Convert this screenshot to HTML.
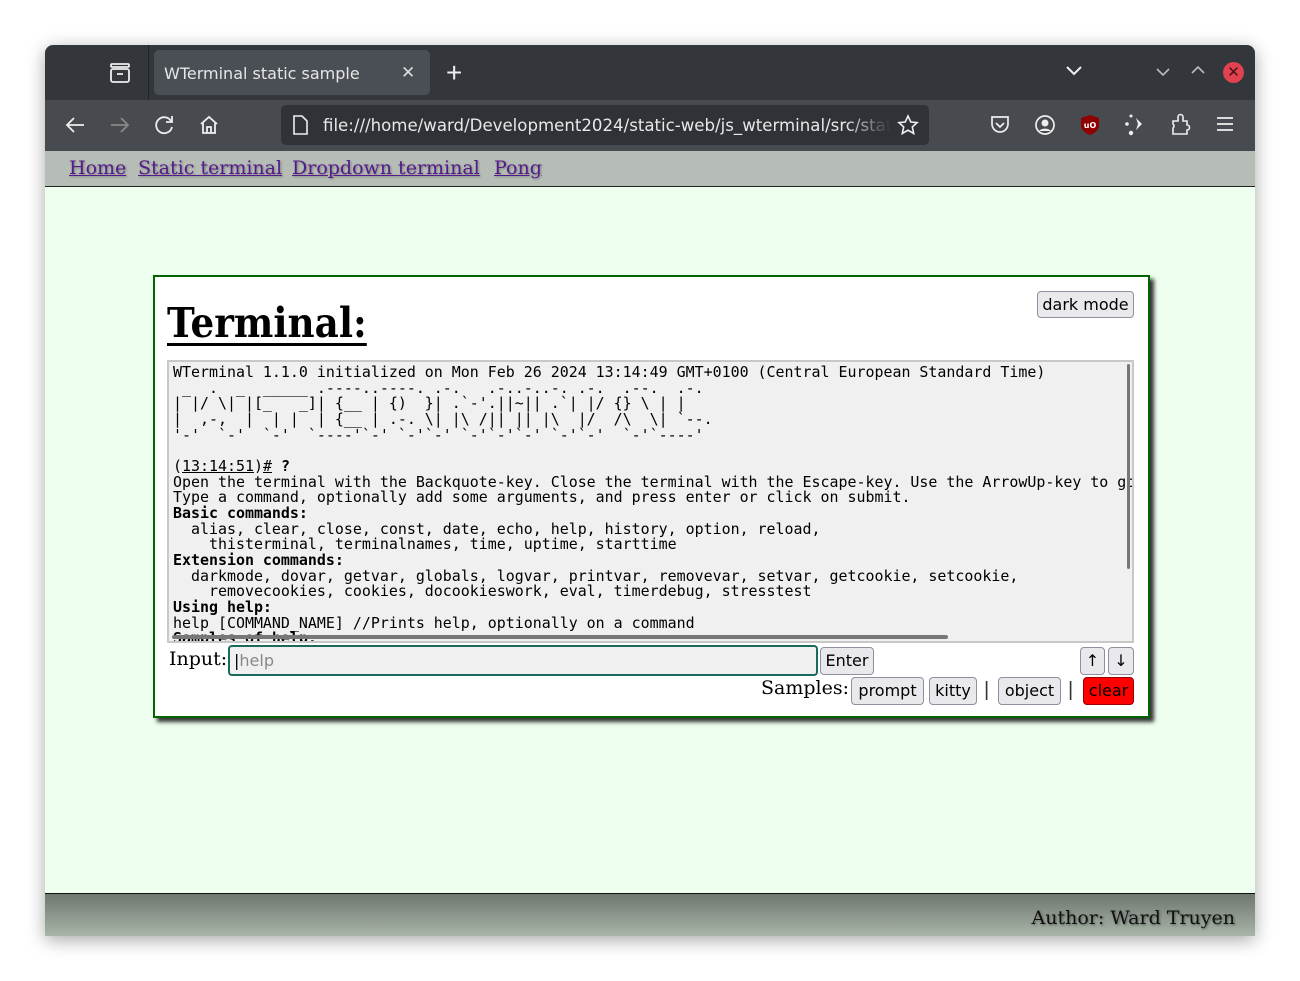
<!DOCTYPE html>
<html><head><meta charset="utf-8">
<style>
*{margin:0;padding:0;box-sizing:border-box}
body{width:1300px;height:981px;background:#fff;position:relative;overflow:hidden;font-family:"Liberation Sans","DejaVu Sans",sans-serif}
.win{position:absolute;left:45px;top:45px;width:1210px;height:891px;border-radius:8px 8px 0 0;overflow:hidden;box-shadow:0 4px 18px rgba(0,0,0,.35)}
.tabbar{position:absolute;left:0;top:0;width:1210px;height:55px;background:#33373b}
.nav{position:absolute;left:0;top:55px;width:1210px;height:51px;background:#474b50}
.tab{position:absolute;left:109px;top:5px;width:276px;height:45px;background:#4a4f55;border-radius:5px;color:#e6e6e6;font-family:"DejaVu Sans",sans-serif;font-size:16px;line-height:47px;padding-left:10px}
.url{position:absolute;left:236px;top:5px;width:648px;height:40px;background:#2f3236;border-radius:5px}
.url span{position:absolute;left:42px;top:1px;width:568px;overflow:hidden;white-space:nowrap;color:#e8e8e8;font-family:"DejaVu Sans",sans-serif;font-size:16.6px;line-height:40px;-webkit-mask-image:linear-gradient(90deg,#000 92%,transparent);mask-image:linear-gradient(90deg,#000 92%,transparent)}
.links{position:absolute;left:0;top:106px;width:1210px;height:36px;background:#b6bdb6;border-bottom:1px solid #222;font-family:"DejaVu Serif",serif;font-size:19px}
.links a{position:absolute;top:6px;color:#551a8b;text-decoration:underline;text-shadow:1px 1px 2px rgba(0,0,0,.35)}
.main{position:absolute;left:0;top:142px;width:1210px;height:706px;background:#efffef}
.foot{position:absolute;left:0;top:848px;width:1210px;height:43px;background:linear-gradient(#6f776f,#a9b5a9);border-top:1px solid #111}
.foot span{position:absolute;right:20px;top:13px;font-family:"DejaVu Serif",serif;font-size:19px;color:#111;text-shadow:1px 1px 2px rgba(0,0,0,.4)}
.panel{position:absolute;left:108px;top:88px;width:997px;height:443px;background:#fff;border:2px solid #006400;box-shadow:4px 4px 4px #333}
h1{position:absolute;left:12px;top:22px;font-family:"DejaVu Serif",serif;font-size:41px;font-weight:bold;text-decoration:underline;text-decoration-thickness:3px;text-underline-offset:6px;color:#000;transform:scaleX(0.91);transform-origin:0 0;white-space:nowrap}
.btn{position:absolute;background:#e9e9ed;border:1px solid #8f8f9d;border-radius:4px;font-family:"DejaVu Sans",sans-serif;font-size:16px;color:#000;text-align:center}
.term{position:absolute;left:12px;top:83px;width:967px;height:283px;background:#f0f0f0;border:2px solid #c8c8c8;overflow:hidden}
pre{position:absolute;left:4px;top:3px;font-family:"DejaVu Sans Mono",monospace;font-size:14.95px;line-height:15.65px;color:#000;white-space:pre}
pre b{font-weight:bold}
.vs{position:absolute;right:2px;top:2px;width:3px;height:205px;background:#777;border-radius:2px}
.hs{position:absolute;left:3px;bottom:2px;width:776px;height:4px;background:#777;border-radius:2px}
.lbl{position:absolute;font-family:"DejaVu Serif",serif;font-size:19px;color:#000}
.inp{position:absolute;left:73px;top:368px;width:590px;height:31px;background:#f0f0f0;border:2px solid #1a6b5e;border-radius:4px;font-family:"DejaVu Sans",sans-serif;font-size:16px;color:#888;line-height:27px;padding-left:4px}
.sep{position:absolute;top:402px;font-size:20px;color:#333}
</style></head><body>
<div class="win">
 <div class="tabbar">
  <div style="position:absolute;left:103px;top:0;width:1px;height:55px;background:#222"></div>
  <svg style="position:absolute;left:64px;top:18px" width="22" height="20" viewBox="0 0 22 20"><rect x="2" y="1" width="18" height="3" rx="1" fill="none" stroke="#eee" stroke-width="1.8"/><rect x="2" y="6" width="18" height="13" rx="2" fill="none" stroke="#eee" stroke-width="1.8"/><line x1="8" y1="11" x2="14" y2="11" stroke="#eee" stroke-width="1.8"/></svg>
  <div class="tab">WTerminal static sample<span style="position:absolute;left:247px;top:0;font-size:17px;color:#ddd">✕</span></div>
  <div style="position:absolute;left:401px;top:12px;color:#eee;font-size:28px;font-weight:300">+</div>
  <svg style="position:absolute;left:1020px;top:20px" width="18" height="12"><polyline points="2,2 9,9 16,2" fill="none" stroke="#eee" stroke-width="2"/></svg>
  <svg style="position:absolute;left:1110px;top:22px" width="16" height="10"><polyline points="2,2 8,8 14,2" fill="none" stroke="#bbb" stroke-width="1.6"/></svg>
  <svg style="position:absolute;left:1145px;top:20px" width="16" height="10"><polyline points="2,8 8,2 14,8" fill="none" stroke="#bbb" stroke-width="1.6"/></svg>
  <div style="position:absolute;left:1178px;top:17px;width:21px;height:21px;border-radius:50%;background:#e0424f;color:#4a1016;font-size:15px;line-height:21px;text-align:center">✕</div>
 </div>
 <div class="nav">
  <svg style="position:absolute;left:19px;top:15px" width="22" height="20"><path d="M20 10H3M10 3L3 10L10 17" fill="none" stroke="#eee" stroke-width="1.8"/></svg>
  <svg style="position:absolute;left:64px;top:15px" width="22" height="20"><path d="M2 10H19M12 3L19 10L12 17" fill="none" stroke="#888" stroke-width="1.8"/></svg>
  <svg style="position:absolute;left:109px;top:14px" width="22" height="22"><path d="M17 7A8 8 0 1 0 18 13" fill="none" stroke="#eee" stroke-width="1.8"/><path d="M18 2V8H12" fill="none" stroke="#eee" stroke-width="1.8"/></svg>
  <svg style="position:absolute;left:153px;top:14px" width="22" height="22"><path d="M3 10L11 3L19 10M5 9V19H17V9M9 19V13H13V19" fill="none" stroke="#eee" stroke-width="1.8"/></svg>
  <div class="url"><span>file:///home/ward/Development2024/static-web/js_wterminal/src/static.html</span>
   <svg style="position:absolute;left:10px;top:10px" width="18" height="20"><path d="M3 1H11L16 6V19H3Z" fill="none" stroke="#eee" stroke-width="1.6"/></svg>
   <svg style="position:absolute;left:616px;top:9px" width="22" height="22"><path d="M11 2L13.8 8L20 8.6L15.3 13L16.7 19.5L11 16.2L5.3 19.5L6.7 13L2 8.6L8.2 8Z" fill="none" stroke="#eee" stroke-width="1.6"/></svg>
  </div>
  <svg style="position:absolute;left:944px;top:15px" width="22" height="20"><path d="M3 2H19V9A8 8 0 0 1 3 9Z" fill="none" stroke="#eee" stroke-width="1.7"/><polyline points="7,8 11,12 15,8" fill="none" stroke="#eee" stroke-width="1.7"/></svg>
  <svg style="position:absolute;left:989px;top:14px" width="22" height="22"><circle cx="11" cy="11" r="9" fill="none" stroke="#eee" stroke-width="1.7"/><circle cx="11" cy="9" r="3.5" fill="#eee"/><path d="M5 17A7 5 0 0 1 17 17" fill="#eee"/></svg>
  <svg style="position:absolute;left:1035px;top:14px" width="20" height="22"><path d="M10 1L19 4V11C19 16 15 19 10 21C5 19 1 16 1 11V4Z" fill="#8f0000"/><text x="10" y="14" font-size="8" font-weight="bold" fill="#fff" text-anchor="middle" font-family="DejaVu Sans">uO</text></svg>
  <svg style="position:absolute;left:1078px;top:13px" width="24" height="24"><circle cx="4" cy="11" r="1.8" fill="#eee"/><circle cx="8" cy="3" r="1.5" fill="#eee"/><circle cx="8" cy="20" r="2.2" fill="#eee"/><path d="M13 5L19 11L13 17L15 11Z" fill="#eee"/></svg>
  <svg style="position:absolute;left:1125px;top:13px" width="22" height="24"><path d="M3 8H8V4A2.5 2.5 0 0 1 13 4V8H17V12A2.5 2.5 0 0 1 17 17V21H3V15A2.5 2.5 0 0 0 3 11Z" fill="none" stroke="#eee" stroke-width="1.6"/></svg>
  <svg style="position:absolute;left:1170px;top:15px" width="20" height="18"><path d="M2 3H18M2 9H18M2 15H18" stroke="#eee" stroke-width="1.7"/></svg>
 </div>
 <div class="links"><a style="left:24px">Home</a><a style="left:93px">Static terminal</a><a style="left:247px">Dropdown terminal</a><a style="left:449px">Pong</a></div>
 <div class="main">
  <div class="panel">
   <h1>Terminal:</h1>
   <div class="btn" style="left:882px;top:14px;width:97px;height:27px;line-height:25px">dark mode</div>
   <div class="term">
<pre>WTerminal 1.1.0 initialized on Mon Feb 26 2024 13:14:49 GMT+0100 (Central European Standard Time)
 _  .  _  _____ .----..----. .-.   .-..-..-. .-.  .--.  .-.
| |/ \| |[_   _]| {__ | {)  }| .`-'.||~|| .`| |/ {} \ | |
|  ,-,  |  | |  | {__ | .-. \| |\ /|| || |\  |/  /\  \| `--.
'-'  `-'  `-'  `----'`-' `-'`-' `-'`-'`-' `-'`-'  `-'`----'

(<u>13:14:51</u>)<u>#</u> <b>?</b>
Open the terminal with the Backquote-key. Close the terminal with the Escape-key. Use the ArrowUp-key to go
Type a command, optionally add some arguments, and press enter or click on submit.
<b>Basic commands:</b>
  alias, clear, close, const, date, echo, help, history, option, reload,
    thisterminal, terminalnames, time, uptime, starttime
<b>Extension commands:</b>
  darkmode, dovar, getvar, globals, logvar, printvar, removevar, setvar, getcookie, setcookie,
    removecookies, cookies, docookieswork, eval, timerdebug, stresstest
<b>Using help:</b>
help [COMMAND_NAME] //Prints help, optionally on a command
<b>Samples of help:</b></pre>
    <div class="vs"></div><div class="hs"></div>
   </div>
   <div class="lbl" style="left:14px;top:371px">Input:</div>
   <div class="inp"><span style="color:#000">|</span>help</div>
   <div class="btn" style="left:665px;top:370px;width:54px;height:28px;line-height:26px">Enter</div>
   <div class="btn" style="left:925px;top:370px;width:25px;height:28px;line-height:26px">↑</div>
   <div class="btn" style="left:953px;top:370px;width:26px;height:28px;line-height:26px">↓</div>
   <div class="lbl" style="left:606px;top:400px">Samples:</div>
   <div class="btn" style="left:696px;top:400px;width:73px;height:28px;line-height:26px">prompt</div>
   <div class="btn" style="left:774px;top:400px;width:48px;height:28px;line-height:26px">kitty</div>
   <div class="sep" style="left:829px">|</div>
   <div class="btn" style="left:843px;top:400px;width:63px;height:28px;line-height:26px">object</div>
   <div class="sep" style="left:913px">|</div>
   <div class="btn" style="left:928px;top:400px;width:51px;height:28px;line-height:26px;background:#f00;border-color:#900">clear</div>
  </div>
 </div>
 <div class="foot"><span>Author: Ward Truyen</span></div>
</div>
</body></html>
